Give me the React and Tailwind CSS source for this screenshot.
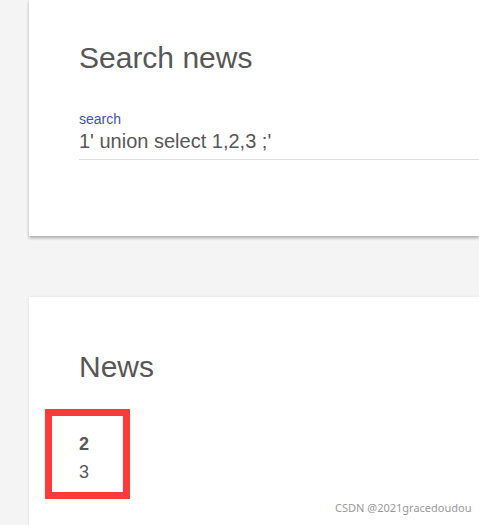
export default function App() {
  return (
    <div
      className="relative h-[525px] overflow-hidden bg-[#f4f4f4] pl-[29px]"
      style={{ fontFamily: '"Liberation Sans", Arial, sans-serif' }}
    >
      {/* search card */}
      <section className="h-[236px] bg-white pl-[50px] shadow-[0_2px_3px_rgba(0,0,0,0.3)]">
        <h2 className="pt-[40px] text-[30px] leading-[36px] text-[#575757]">Search news</h2>
        <div className="mt-[35px]">
          <label className="block text-[14px] leading-[16px] text-[#3f51b5]">search</label>
          <div className="border-b border-[#dedede] pb-[4px] text-[20px] leading-[28px] text-[#575757]">
            1' union select 1,2,3 ;'
          </div>
        </div>
      </section>

      {/* news card */}
      <section className="mt-[61px] h-[300px] bg-white shadow-[0_0_3px_rgba(0,0,0,0.08)]">
        <h2 className="pl-[50px] pt-[52px] text-[30px] leading-[36px] text-[#575757]">News</h2>
        <div className="ml-[16px] mt-[24px] h-[90px] w-[85px] border-[7px] border-[#fc3a3a] pl-[27px] pt-[14px] text-[18px] text-[#575757]">
          <div className="font-bold leading-[28px]">2</div>
          <div className="leading-[28px]">3</div>
        </div>
      </section>

      <span
        className="absolute left-[335px] top-[500px] text-[11px] text-[#9a9a9a]"
        style={{ fontFamily: '"Noto Sans", sans-serif' }}
      >
        CSDN @2021gracedoudou
      </span>
    </div>
  );
}
